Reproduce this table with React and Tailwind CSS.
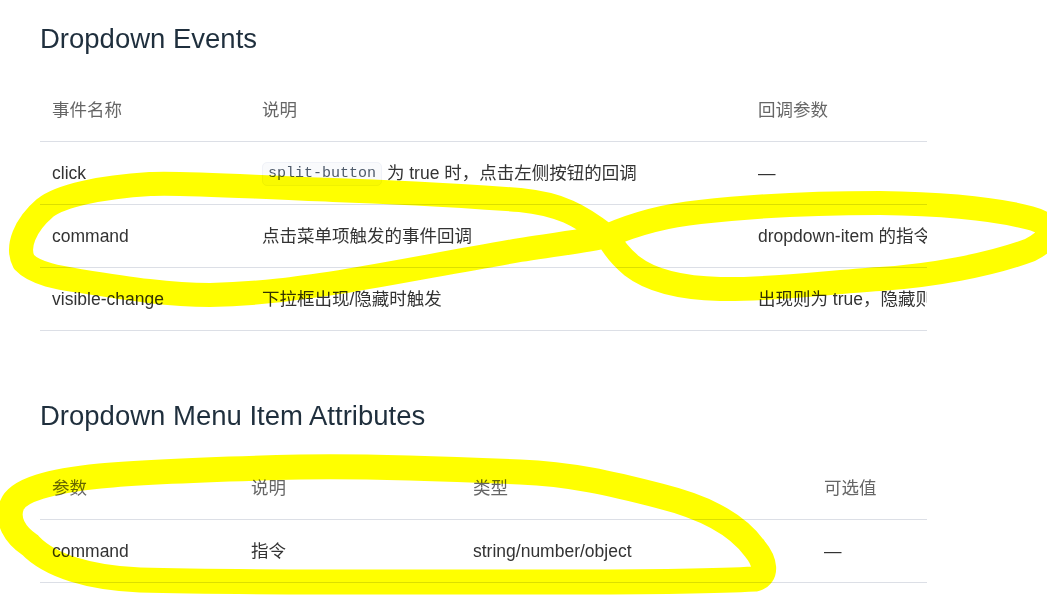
import React from "react";

const font = { fontFamily: '"Liberation Sans", "Noto Sans CJK SC", sans-serif' };

function Cell({ w, children, header }) {
  return (
    <div
      className={
        "shrink-0 px-[12px] whitespace-nowrap overflow-visible " +
        (header ? "text-[#666666]" : "text-[#333333]")
      }
      style={{ width: w }}
    >
      {children}
    </div>
  );
}

function Row({ widths, cells, header }) {
  return (
    <div className="flex h-[63px] items-center border-b border-[#dcdfe6] w-max">
      {cells.map((c, i) => (
        <Cell key={i} w={widths[i]} header={header}>
          {c}
        </Cell>
      ))}
    </div>
  );
}

function Code({ children }) {
  return (
    <code
      className="inline-block px-[5px] leading-[22px] border border-[#f0f2f8] bg-[#f9fafc] rounded-[5px] text-[15px] text-[#4f5b6b] align-middle"
      style={{ fontFamily: '"Liberation Mono", monospace' }}
    >
      {children}
    </code>
  );
}

export default function App() {
  const w1 = [210, 496, 300];
  const w2 = [199, 222, 351, 115];
  return (
    <div
      className="relative w-full h-[599px] overflow-hidden bg-white text-[17.5px]"
      style={font}
    >
      <div className="pl-[40px]">
        <h3 className="mt-[18px] mb-[20px] text-[27.5px] leading-[41px] font-normal text-[#1f2f3d]">
          Dropdown Events
        </h3>
        <div className="w-[887px] overflow-hidden">
          <Row widths={w1} header cells={["事件名称", "说明", "回调参数"]} />
          <Row
            widths={w1}
            cells={[
              "click",
              <span>
                <Code>split-button</Code> 为 true 时，点击左侧按钮的回调
              </span>,
              "—",
            ]}
          />
          <Row
            widths={w1}
            cells={["command", "点击菜单项触发的事件回调", "dropdown-item 的指令"]}
          />
          <Row
            widths={w1}
            cells={["visible-change", "下拉框出现/隐藏时触发", "出现则为 true，隐藏则为 false"]}
          />
        </div>

        <h3 className="mt-[64px] mb-[21px] text-[27.5px] leading-[41px] font-normal text-[#1f2f3d]">
          Dropdown Menu Item Attributes
        </h3>
        <div className="w-[887px] overflow-hidden">
          <Row widths={w2} header cells={["参数", "说明", "类型", "可选值"]} />
          <Row widths={w2} cells={["command", "指令", "string/number/object", "—"]} />
        </div>
      </div>

      <svg
        className="absolute inset-0 pointer-events-none mix-blend-multiply"
        width="1047"
        height="599"
        viewBox="0 0 1047 599"
        fill="none"
      >
        <path
          d="M 607,236
             C 580,215 560,204 520,200
             C 450,195 400,192 333,190
             C 250,187 180,182 150,184
             C 100,187 60,196 45,208
             C 25,225 16,247 24,262
             C 35,274 60,278 80,281
             C 130,289 170,295 210,295
             C 260,294 300,288 340,282
             C 400,272 450,262 520,250
             C 560,244 590,240 607,236
             C 630,226 660,216 700,212
             C 760,205 820,203 880,203
             C 950,204 1000,210 1030,218
             C 1060,226 1050,240 1030,250
             C 990,265 930,276 880,279
             C 820,283 770,290 720,289
             C 680,288 650,280 632,266
             C 620,256 612,245 607,236 Z"
          stroke="#ffff00"
          strokeWidth="24"
          strokeLinejoin="round"
          strokeLinecap="round"
        />
        <path
          d="M 520,472
             C 430,468 350,466 300,467
             C 220,469 150,471 100,476
             C 50,481 18,490 12,505
             C 6,520 15,535 30,545
             C 50,566 90,578 140,580
             C 250,583 400,582 560,582
             C 650,582 720,581 755,579
             C 768,576 765,561 755,549
             C 735,521 700,506 660,496
             C 610,483 570,474 520,472 Z"
          stroke="#ffff00"
          strokeWidth="25"
          strokeLinejoin="round"
          strokeLinecap="round"
        />
      </svg>
    </div>
  );
}
